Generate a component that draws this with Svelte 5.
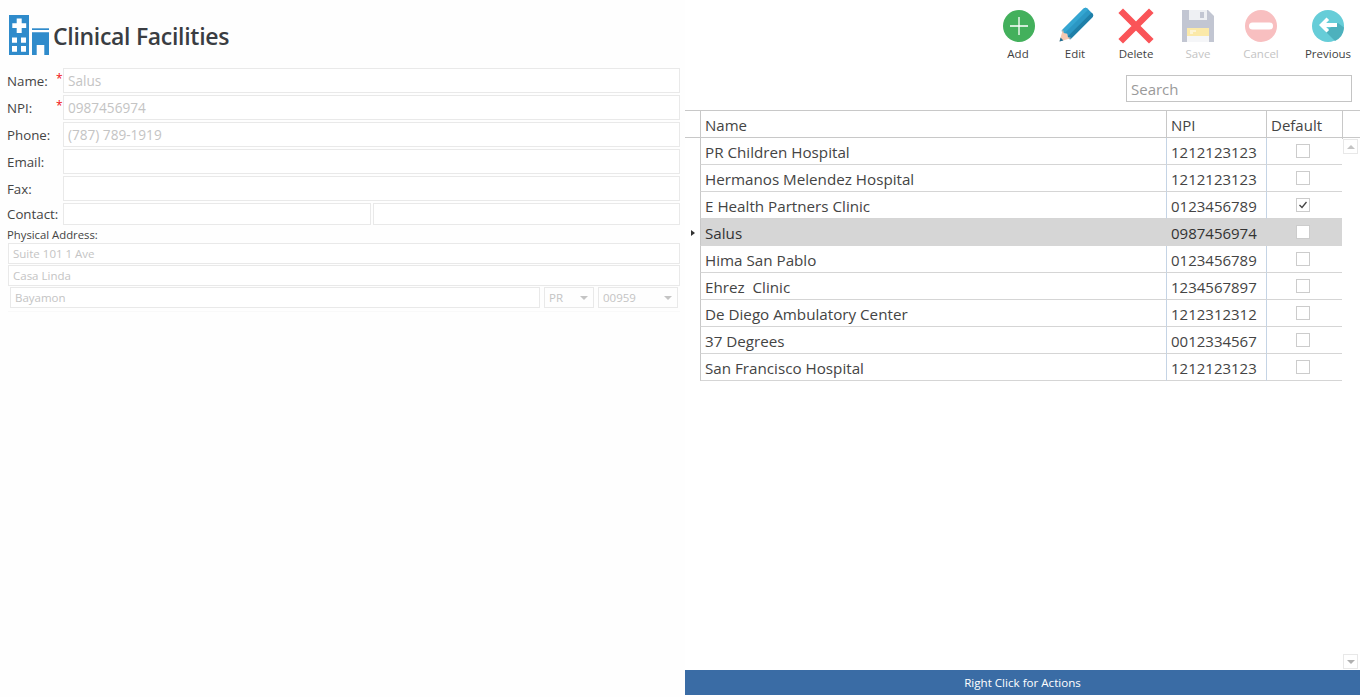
<script>
  const fields = [
    { label: 'Name:', value: 'Salus', required: true },
    { label: 'NPI:', value: '0987456974', required: true },
    { label: 'Phone:', value: '(787) 789-1919' },
    { label: 'Email:', value: '' },
    { label: 'Fax:', value: '' }
  ];
  const rows = [
    { name: 'PR Children Hospital', npi: '1212123123' },
    { name: 'Hermanos Melendez Hospital', npi: '1212123123' },
    { name: 'E Health Partners Clinic', npi: '0123456789', def: true },
    { name: 'Salus', npi: '0987456974', selected: true },
    { name: 'Hima San Pablo', npi: '0123456789' },
    { name: 'Ehrez  Clinic', npi: '1234567897' },
    { name: 'De Diego Ambulatory Center', npi: '1212312312' },
    { name: '37 Degrees', npi: '0012334567' },
    { name: 'San Francisco Hospital', npi: '1212123123' }
  ];
</script>

<div class="page">
  <section class="left">
    <header class="title">
      <svg class="logo" width="41" height="40" viewBox="0 0 41 40">
        <rect x="0" y="0" width="20" height="40" fill="#2f8bcb" />
        <path d="M7.700 3.500h5v4.800h4.500v4.800h-4.500V18h-5v-4.900H3.300V8.300h4.400z" fill="#fff" />
        <path d="M3 22.500h5v5.300H3zM12 22.500h5v5.300h-5zM3 31h5v5.700H3zM12 31h5v5.700h-5z" fill="#fff" />
        <rect x="23" y="13.300" width="17" height="1.700" fill="#2f8bcb" />
        <path d="M23 17.300h17V40h-4.700V30h-7.600v10H23z" fill="#2f8bcb" />
      </svg>
      <h1>Clinical Facilities</h1>
    </header>

    <div class="fields">
      {#each fields as f}
        <div class="row">
          <span class="label">{f.label}</span>
          {#if f.required}<span class="req">*</span>{/if}
          <input class="input" readonly value={f.value} />
        </div>
      {/each}
      <div class="row contact">
        <span class="label">Contact:</span>
        <input class="input first" readonly />
        <input class="input last" readonly />
      </div>
    </div>

    <div class="address-label">Physical Address:</div>
    <input class="addr" readonly value="Suite 101 1 Ave" />
    <input class="addr" readonly value="Casa Linda" />
    <div class="city-row">
      <input class="addr city" readonly value="Bayamon" />
      <div class="select state">PR<i></i></div>
      <div class="select zip">00959<i></i></div>
    </div>
    <div class="ghost"></div>
  </section>

  <section class="right">
    <div class="toolbar">
      <button class="tool add">
        <svg width="32" height="32" viewBox="0 0 32 32">
          <circle cx="16" cy="16" r="16" fill="#43b05c" />
          <path d="M16 7v18M7 16h18" stroke="#fff" stroke-width="1.300" fill="none" />
        </svg>
        <span>Add</span>
      </button>
      <button class="tool edit">
        <svg width="33" height="32" viewBox="0 0 33 32">
          <g transform="translate(0.500 31.500) rotate(-45)">
            <rect x="8" y="-6.200" width="35" height="12.400" rx="3" fill="#2b97c4" />
            <path d="M9 2.200h34V3.200a3 3 0 0 1-3 3H9z" fill="#1f7fa8" />
            <path d="M9-6.200h31a3 3 0 0 1 3 3V-2.200H9z" fill="#35a6d2" />
            <path d="M0 0 11-6.200 9-3 11 0 9 3 11 6.200z" fill="#f5c9b2" />
            <path d="M0 0 3.500-2V2z" fill="#1f6f94" />
          </g>
        </svg>
        <span>Edit</span>
      </button>
      <button class="tool delete">
        <svg width="32" height="32" viewBox="0 0 32 32">
          <path d="M3 3l26 26M29 3 3 29" stroke="#fa5458" stroke-width="6.500" fill="none" stroke-linecap="square" />
        </svg>
        <span>Delete</span>
      </button>
      <button class="tool muted save">
        <svg width="32" height="32" viewBox="0 0 32 32">
          <path d="M0 0h26l6 6v26H0z" fill="#c2c6d2" />
          <rect x="7" y="0" width="18" height="10" fill="#eef0f3" />
          <rect x="18" y="2" width="4" height="6" fill="#c2c6d2" />
          <rect x="5" y="18" width="22" height="14" fill="#f5f6f8" />
          <rect x="5" y="18" width="22" height="8" fill="#fbe9a9" />
          <path d="M8 21h6M8 23h3" stroke="#fff" stroke-width="1" />
        </svg>
        <span>Save</span>
      </button>
      <button class="tool muted cancel">
        <svg width="32" height="32" viewBox="0 0 32 32">
          <circle cx="16" cy="16" r="16" fill="#f8bfc0" />
          <rect x="4" y="12.500" width="24" height="7" rx="3.500" fill="#fff" />
        </svg>
        <span>Cancel</span>
      </button>
      <button class="tool previous">
        <svg width="32" height="32" viewBox="0 0 32 32">
          <circle cx="16" cy="16" r="16" fill="#66cdd8" />
          <path d="M13 21l10 10a16 16 0 0 0 9-13.500L26 13z" fill="#4db1bd" />
          <path d="M7 15 14.500 7.500l2.600 2.600-3 3H25v4H14.100l3 3-2.600 2.400z" fill="#fff" />
        </svg>
        <span>Previous</span>
      </button>
    </div>

    <div class="search-row">
      <input class="search" placeholder="Search" />
    </div>

    <div class="grid-head">
      <div class="gutter"></div>
      <div class="cell">Name</div>
      <div class="cell">NPI</div>
      <div class="cell">Default</div>
      <div class="cell"></div>
    </div>

    <div class="grid-body">
      <div class="rows">
        {#each rows as r}
          <div class="grid-row" class:selected={r.selected}>
            <div class="gutter">{#if r.selected}<i class="pointer"></i>{/if}</div>
            <div class="cell name">{r.name}</div>
            <div class="cell">{r.npi}</div>
            <div class="cell center">
              <span class="check">
                {#if r.def}
                  <svg width="12" height="12" viewBox="0 0 12 12"><path d="M2.500 6 5 8.500 9.500 3" stroke="#444" stroke-width="1.300" fill="none" /></svg>
                {/if}
              </span>
            </div>
          </div>
        {/each}
      </div>
      <div class="scroll">
        <div class="scroll-btn"><i class="up"></i></div>
        <div class="scroll-btn"><i class="down"></i></div>
      </div>
    </div>

    <div class="actions">Right Click for Actions</div>
  </section>
</div>

<style>
  :global(body) {
    margin: 0;
    background: #fff;
  }
  .page {
    display: flex;
    height: 697px;
    width: 1360px;
    overflow: hidden;
    font-family: "Open Sans", "Noto Sans", sans-serif;
    color: #3f3f3f;
  }
  .left {
    width: 685px;
    flex: none;
    box-sizing: border-box;
    display: flex;
    flex-direction: column;
    padding-left: 7px;
    background: #fefefe;
  }
  .title {
    display: flex;
    align-items: flex-start;
    height: 68px;
    padding: 15px 0 0 2px;
    box-sizing: border-box;
  }
  .logo {
    flex: none;
  }
  h1 {
    margin: 5px 0 0 3px;
    font-size: 23px;
    line-height: 32px;
    font-weight: 600;
    letter-spacing: -0.300px;
    color: #3a3d42;
  }
  .fields {
    display: flex;
    flex-direction: column;
    gap: 2px;
  }
  .row {
    display: flex;
    align-items: center;
    position: relative;
    height: 25px;
    width: 673px;
  }
  .row.contact {
    height: 22px;
    gap: 2px;
  }
  .label {
    width: 56px;
    flex: none;
    font-size: 13.300px;
    color: #444;
    white-space: nowrap;
  }
  .req {
    position: absolute;
    left: 49px;
    top: 3px;
    color: #f01010;
    font-size: 12px;
    line-height: 16px;
  }
  .input {
    flex: 1;
    min-width: 0;
    height: 100%;
    box-sizing: border-box;
    border: 1px solid #e9e9e9;
    background: #fff;
    padding: 0 4px;
    font: inherit;
    font-size: 13.600px;
    color: #c4c4c4;
    outline: none;
  }
  .input.first {
    flex: none;
    width: 308px;
  }
  .contact .label {
    width: 54px;
  }
  .address-label {
    font-size: 11.300px;
    line-height: 16px;
    margin-top: 2px;
    height: 16px;
    color: #444;
  }
  .addr {
    display: block;
    box-sizing: border-box;
    width: 672px;
    height: 21px;
    margin: 0 0 1px 1px;
    border: 1px solid #e9e9e9;
    background: #fff;
    padding: 0 4px;
    font: inherit;
    font-size: 11.500px;
    color: #c4c4c4;
    outline: none;
  }
  .city-row {
    display: flex;
    padding-left: 3px;
    gap: 4px;
  }
  .addr.city {
    width: 530px;
    height: 21px;
    margin: 0;
  }
  .select {
    box-sizing: border-box;
    height: 21px;
    border: 1px solid #e9e9e9;
    display: flex;
    align-items: center;
    justify-content: space-between;
    padding: 0 4px;
    font-size: 11.500px;
    color: #c4c4c4;
  }
  .select i {
    width: 0;
    height: 0;
    border-left: 4px solid transparent;
    border-right: 4px solid transparent;
    border-top: 4px solid #c4c4c4;
    margin-right: 1px;
  }
  .state { width: 50px; }
  .zip { width: 80px; }
  .ghost {
    width: 672px;
    margin: 3px 0 0 1px;
    border-top: 1px solid #f9f9f9;
  }

  .right {
    flex: 1;
    display: flex;
    flex-direction: column;
    height: 697px;
    min-width: 0;
  }
  .toolbar {
    height: 75px;
    box-sizing: border-box;
    padding-top: 10px;
    display: grid;
    grid-template-columns: 56px 58px 64px 60px 66px 66px;
    justify-content: end;
  }
  .tool {
    border: 0;
    background: none;
    padding: 0;
    font: inherit;
    font-size: 11.500px;
    color: #3f3f3f;
    display: flex;
    flex-direction: column;
    align-items: center;
    height: 60px;
  }
  .tool svg {
    display: block;
    flex: none;
    overflow: visible;
  }
  .tool span {
    margin-top: 3px;
    line-height: 17px;
    white-space: nowrap;
  }
  .tool.add svg {
    margin-left: 2px;
  }
  .tool.previous {
    padding-left: 2px;
  }
  .tool.muted {
    color: #c4c4c4;
  }
  .search-row {
    height: 35px;
    display: flex;
    justify-content: flex-end;
    padding-right: 8px;
    box-sizing: border-box;
  }
  .search {
    width: 226px;
    height: 27px;
    box-sizing: border-box;
    border: 1px solid #c4c4c4;
    padding: 1px 4px 0;
    font: inherit;
    font-size: 15px;
    outline: none;
  }
  .search::placeholder {
    color: #9a9a9a;
    opacity: 1;
  }
  .grid-head {
    display: grid;
    grid-template-columns: 15px 466px 100px 76px 18px;
    height: 28px;
    box-sizing: border-box;
    border-top: 1px solid #c8c8c8;
    border-bottom: 1px solid #c8c8c8;
    font-size: 15px;
    line-height: 28px;
  }
  .grid-head .cell {
    border-left: 1px solid #c8c8c8;
    padding-left: 4px;
    color: #444;
  }
  .grid-body {
    flex: 1;
    display: flex;
    min-height: 0;
  }
  .rows {
    width: 657px;
    flex: none;
  }
  .grid-row {
    display: grid;
    grid-template-columns: 15px 466px 100px 76px;
    grid-template-rows: 27px;
    height: 27px;
    font-size: 15px;
    line-height: 29px;
    color: #444;
  }
  .grid-row .gutter {
    display: flex;
    align-items: center;
    justify-content: center;
    padding-left: 1px;
  }
  .grid-row .cell {
    box-sizing: border-box;
    height: 27px;
    border-bottom: 1px solid #d5d5d5;
    border-left: 1px solid #c5d4e5;
    padding-left: 4px;
    white-space: pre;
  }
  .grid-row .cell.name {
    border-left-color: #c8c8c8;
    font-size: 15.200px;
  }
  .grid-row.selected .cell {
    background: #d6d6d6;
    border-bottom-color: #d6d6d6;
    border-left-color: #d6d6d6;
    color: #333;
  }
  .grid-row.selected .cell.name {
    border-left-color: #c8c8c8;
  }
  .grid-row .cell.center {
    display: flex;
    align-items: flex-start;
    justify-content: center;
    padding: 6px 4px 0 0;
  }
  .check {
    width: 14px;
    height: 14px;
    box-sizing: border-box;
    border: 1px solid #ccc;
    background: #fff;
    display: flex;
    align-items: center;
    justify-content: center;
    flex: none;
  }
  .pointer {
    width: 0;
    height: 0;
    border-top: 3.500px solid transparent;
    border-bottom: 3.500px solid transparent;
    border-left: 4px solid #333;
  }
  .scroll {
    flex: 1;
    display: flex;
    flex-direction: column;
    justify-content: space-between;
    padding: 1px 2px 1px 1px;
  }
  .scroll-btn {
    height: 15px;
    width: 15px;
    box-sizing: border-box;
    border: 1px solid #e8e8e8;
    display: flex;
    align-items: center;
    justify-content: center;
  }
  .up, .down {
    width: 0;
    height: 0;
    border-left: 4px solid transparent;
    border-right: 4px solid transparent;
  }
  .up { border-bottom: 4px solid #c4c4c4; }
  .down { border-top: 4px solid #b0b0b0; }
  .actions {
    height: 25px;
    margin-bottom: 2px;
    flex: none;
    background: #3a6ca5;
    color: #fff;
    font-size: 11.600px;
    line-height: 25px;
    text-align: center;
  }
</style>
